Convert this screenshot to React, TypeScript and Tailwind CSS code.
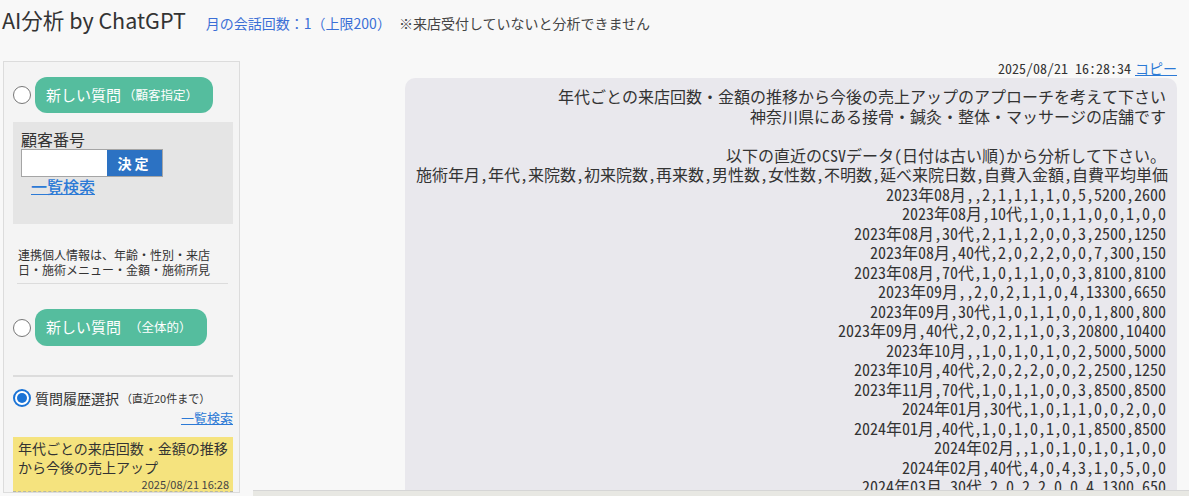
import React from "react";

const uiFont = { fontFamily: '"Noto Sans CJK JP", "Noto Sans", sans-serif' };
const monoFont = { fontFamily: '"Noto Sans Mono CJK JP", "Noto Sans CJK JP", monospace' };

const promptLines = [
  "年代ごとの来店回数・金額の推移から今後の売上アップのアプローチを考えて下さい",
  "神奈川県にある接骨・鍼灸・整体・マッサージの店舗です",
  "",
  "以下の直近のCSVデータ(日付は古い順)から分析して下さい。",
  "施術年月,年代,来院数,初来院数,再来数,男性数,女性数,不明数,延べ来院日数,自費入金額,自費平均単価",
  "2023年08月,,2,1,1,1,1,0,5,5200,2600",
  "2023年08月,10代,1,0,1,1,0,0,1,0,0",
  "2023年08月,30代,2,1,1,2,0,0,3,2500,1250",
  "2023年08月,40代,2,0,2,2,0,0,7,300,150",
  "2023年08月,70代,1,0,1,1,0,0,3,8100,8100",
  "2023年09月,,2,0,2,1,1,0,4,13300,6650",
  "2023年09月,30代,1,0,1,1,0,0,1,800,800",
  "2023年09月,40代,2,0,2,1,1,0,3,20800,10400",
  "2023年10月,,1,0,1,0,1,0,2,5000,5000",
  "2023年10月,40代,2,0,2,2,0,0,2,2500,1250",
  "2023年11月,70代,1,0,1,1,0,0,3,8500,8500",
  "2024年01月,30代,1,0,1,1,0,0,2,0,0",
  "2024年01月,40代,1,0,1,0,1,0,1,8500,8500",
  "2024年02月,,1,0,1,0,1,0,1,0,0",
  "2024年02月,40代,4,0,4,3,1,0,5,0,0",
  "2024年03月,30代,2,0,2,2,0,0,4,1300,650",
];

const Radio = ({ checked }: { checked?: boolean }) =>
  checked ? (
    <span className="w-[18px] h-[18px] shrink-0 rounded-full border-2 border-[#1a73d6] bg-white p-[2px] flex">
      <span className="flex-1 rounded-full bg-[#1a73d6]" />
    </span>
  ) : (
    <span className="w-[18px] h-[18px] shrink-0 rounded-full border border-[#777] bg-white" />
  );

export default function App() {
  return (
    <div className="h-[496px] overflow-hidden bg-[#f8f8f8] text-[#333] flex flex-col" style={uiFont}>
      <div className="h-[46px] shrink-0 flex items-baseline pl-[2px] pt-[5px]">
        <span className="text-[21.5px] leading-[30px] text-[#333]">AI分析 by ChatGPT</span>
        <span className="ml-[20px] text-[14px] text-[#3b6fd6]">月の会話回数：1（上限200）</span>
        <span className="ml-[8px] text-[14px] text-[#444]">※来店受付していないと分析できません</span>
      </div>

      <div className="flex flex-1 min-h-0">
        {/* left side panel */}
        <div className="ml-[3px] mt-[15px] w-[237px] shrink-0 border border-[#dcdcdc] bg-[#f4f4f4] pl-[9px] pr-[5px] pt-[15px] self-start">
          <div className="flex items-center">
            <Radio />
            <div className="ml-[4px] h-[36px] w-[178px] rounded-[12px] bg-[#55bd9e] text-white flex items-center pl-[11px]">
              <span className="text-[15px]">新しい質問</span>
              <span className="text-[12.5px] ml-[2px]">（顧客指定）</span>
            </div>
          </div>

          <div className="mt-[9px] w-[220px] h-[102px] bg-[#e5e5e5] pl-[8px] pt-[7px]">
            <div className="text-[16px] leading-[20px] text-[#333]">顧客番号</div>
            <div className="flex w-[142px] h-[28px] border border-[#a5a5a5]">
              <div className="w-[85px] bg-white" />
              <button className="flex-1 bg-[#2c72c3] text-white text-[14px] font-bold tracking-[3px]">決定</button>
            </div>
            <a className="block pl-[10px] text-[16px] leading-[19px] font-medium text-[#2c7ad6] underline">一覧検索</a>
          </div>

          <div className="mt-[23px] ml-[5px] w-[200px] text-[12px] leading-[15px] text-[#333]">
            連携個人情報は、年齢・性別・来店日・施術メニュー・金額・施術所見
          </div>
          <div className="mt-[6px] ml-[4px] w-[211px] h-px bg-[#dcdcdc]" />

          <div className="mt-[25px] flex items-center">
            <Radio />
            <div className="ml-[4px] h-[37px] w-[172px] rounded-[12px] bg-[#55bd9e] text-white flex items-center pl-[11px]">
              <span className="text-[15px]">新しい質問</span>
              <span className="text-[12.5px] ml-[8px]">（全体的）</span>
            </div>
          </div>

          <div className="mt-[29px] w-[220px] h-[2px] bg-[#dcdcdc]" />

          <div className="mt-[12px] flex items-center">
            <Radio checked />
            <span className="ml-[4px] text-[14px] leading-[18px]">質問履歴選択</span>
            <span className="ml-[2px] text-[11px] leading-[18px]">（直近20件まで）</span>
          </div>
          <div className="w-[220px] mt-[3px] text-right text-[13px] leading-[16px]">
            <a className="text-[#2c7ad6] underline">一覧検索</a>
          </div>

          <div className="mt-[11px] w-[220px] bg-[#f5e37e] border-b border-dashed border-[#b8b8a0] pl-[5px] pr-[4px] pt-[2px]">
            <div className="text-[14px] leading-[19px] text-[#333]">年代ごとの来店回数・金額の推移から今後の売上アップ</div>
            <div className="text-right text-[11px] leading-[14px] text-[#444]">2025/08/21 16:28</div>
          </div>
        </div>

        {/* chat area */}
        <div className="ml-[13px] flex-1 min-w-0 flex flex-col">
          <div className="flex-1 min-h-0 overflow-hidden pt-[14px] pr-[12px] flex flex-col items-end">
            <div className="flex items-center h-[16px] leading-[16px]">
              <span className="text-[14px] text-[#333]" style={monoFont}>2025/08/21 16:28:34</span>
              <a className="ml-[4px] text-[14px] text-[#2c7ad6] underline">コピー</a>
            </div>
            <div className="mt-[2px] w-[772px] rounded-[10px] bg-[#e9e8ed] px-[11px] pt-[9px] pb-[10px] text-right text-[16px] leading-[19.5px] text-[#333]" style={monoFont}>
              {promptLines.map((l, i) => (
                <div key={i} className="h-[19.5px] whitespace-pre">{l}</div>
              ))}
            </div>
          </div>
          <div className="h-[6px] shrink-0 border-t border-[#d6d6d6] bg-[#e8e8e3]" />
        </div>
      </div>
    </div>
  );
}
